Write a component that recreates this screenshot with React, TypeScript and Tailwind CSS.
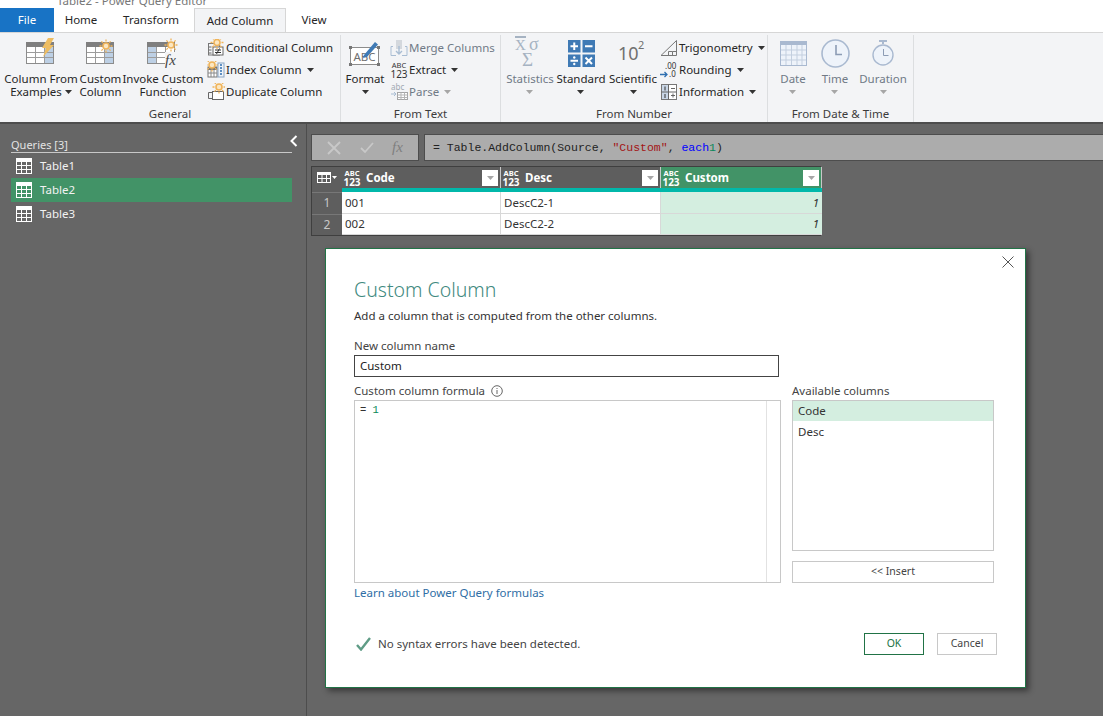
import type { ReactNode } from 'react'

const Caret = ({ light }: { light?: boolean }) => (
  <svg width="7" height="4" viewBox="0 0 7 4" className="shrink-0">
    <path d="M0 0h7L3.5 4z" fill={light ? '#a6a6a6' : '#333333'} />
  </svg>
)

function Sun({ x, y }: { x: number; y: number }) {
  return (
    <g transform={`translate(${x} ${y})`} stroke="#f0b45a" fill="none">
      <circle r="3" strokeWidth="1.6" fill="#fbe7c2" />
      <path d="M0-6.5v2M0 4.5v2M-6.5 0h2M4.5 0h2M-4.6-4.6l1.5 1.5M3.1 3.1l1.5 1.5M-4.6 4.6l1.5-1.5M3.1-3.1l1.5-1.5" strokeWidth="1.3" />
    </g>
  )
}

function GridIcon({ blue = 'last' }: { blue?: 'last' | 'first' }) {
  return (
    <>
      <rect x="0.5" y="4.5" width="27" height="21" fill="#fff" stroke="#8c8c8c" />
      <rect x="0" y="4" width="28" height="5" fill="#7f7f7f" />
      {blue === 'last' ? <rect x="19" y="9" width="8" height="16" fill="#bdd0e5" /> : <rect x="1" y="9" width="8" height="16" fill="#bdd0e5" />}
      <path d="M9.5 9v16M18.5 9v16M1 14.5h26M1 19.5h26" stroke="#9c9c9c" fill="none" />
    </>
  )
}

const ExamplesIcon = () => (
  <svg width="30" height="30" viewBox="0 0 30 30">
    <GridIcon />
    <path d="M22 0h6l-4 7h4L17 19l3-9h-4z" fill="#eebd62" />
  </svg>
)
const CustomIcon = () => (
  <svg width="30" height="30" viewBox="0 0 30 30">
    <GridIcon />
    <Sun x={20} y={8} />
  </svg>
)
const InvokeIcon = () => (
  <svg width="32" height="30" viewBox="0 0 32 30">
    <g transform="translate(0 0)"><GridIcon blue="first" /></g>
    <Sun x={24} y={7} />
    <rect x="18" y="14" width="14" height="15" fill="#f3f4f6" />
    <text x="18" y="27" fontFamily="Liberation Serif, serif" fontStyle="italic" fontSize="15" fill="#444444">fx</text>
  </svg>
)

const SmallIcons: Record<string, ReactNode> = {
  conditional: (
    <svg width="18" height="18" viewBox="0 0 18 18">
      <path d="M1.5 4.5h9M1.5 8h3M1.5 11h3M1.5 14h3" stroke="#666" fill="none" />
      <rect x="1.5" y="4.5" width="11" height="11.5" fill="none" stroke="#777" />
      <rect x="6" y="8" width="10" height="8" fill="#fff" stroke="#666" />
      <path d="M8 11h6M8 13.5h6M12.5 9.5l-3 5.5" stroke="#333" fill="none" />
      <Sun x={10} y={3.5} />
    </svg>
  ),
  index: (
    <svg width="18" height="18" viewBox="0 0 18 18">
      <rect x="1" y="6" width="9" height="10" fill="#fff" stroke="#777" />
      <rect x="1" y="6" width="9" height="3" fill="#777" />
      <path d="M4 9v7M7 9v7M1 12h9" stroke="#888" fill="none" />
      <Sun x={5} y={4} />
      <rect x="11" y="2" width="6" height="14" fill="#eef3f9" stroke="#8aa5c4" />
      <path d="M13 4h2M13 7h2M13 10h2M13 13h2" stroke="#2f6fb0" strokeWidth="1.4" fill="none" />
    </svg>
  ),
  duplicate: (
    <svg width="18" height="18" viewBox="0 0 18 18">
      <path d="M5.5 15.5h-4v-6h4" fill="none" stroke="#666" />
      <rect x="5.5" y="8.5" width="11" height="8" fill="#fff" stroke="#666" />
      <Sun x={12} y={4} />
    </svg>
  ),
  merge: (
    <svg width="18" height="18" viewBox="0 0 18 18">
      <rect x="6" y="1" width="6" height="9" fill="#d4d8dd" />
      <path d="M3 7.5H1v9h5M15 7.5h2v9h-5" fill="none" stroke="#a9bdd3" />
      <path d="M9 7v8M6 12l3 3 3-3" fill="none" stroke="#a9bdd3" strokeWidth="1.4" />
    </svg>
  ),
  abc123: (
    <span className="flex flex-col items-center leading-none text-[#333] [font-family:'Noto_Sans',sans-serif]">
      <span className="text-[7.5px] leading-[8px]">ABC</span>
      <span className="text-[10px] leading-[10px]">123</span>
    </span>
  ),
  parse: (
    <svg width="18" height="18" viewBox="0 0 18 18">
      <text x="1" y="7" fontFamily="Noto Sans, sans-serif" fontSize="8" fill="#a0a8b2">abc</text>
      <path d="M1 11h5M4 9l2 2-2 2" fill="none" stroke="#a9bdd3" />
      <rect x="7.5" y="9.5" width="10" height="7" fill="#fff" stroke="#a5a5a5" />
      <path d="M7.5 12h10M7.5 14.5h10M11 9.5v7M14.5 9.5v7" stroke="#b5b5b5" fill="none" />
    </svg>
  ),
  trig: (
    <svg width="18" height="18" viewBox="0 0 18 18">
      <path d="M1 16.5L16.5 1.5v15z" fill="none" stroke="#777" />
      <path d="M8.5 16.5v-4h4v4M12.5 12.5h4" fill="none" stroke="#777" />
    </svg>
  ),
  round: (
    <span className="relative block h-[18px] w-[18px] [font-family:'Noto_Sans',sans-serif] text-[#333]">
      <span className="absolute left-[5px] top-0 text-[8px] leading-[9px]">.00</span>
      <span className="absolute left-[9px] top-[8px] text-[8px] leading-[9px]">.0</span>
      <svg width="9" height="7" viewBox="0 0 9 7" className="absolute left-0 top-[10px]">
        <path d="M0 3.5h7M4.5 1l2.5 2.5L4.5 6" fill="none" stroke="#2f6fb0" strokeWidth="1.3" />
      </svg>
    </span>
  ),
  info: (
    <svg width="18" height="18" viewBox="0 0 18 18">
      <rect x="1.5" y="1.5" width="15" height="15" fill="#fff" stroke="#777" />
      <rect x="2" y="2" width="6" height="14" fill="#c9d6e6" />
      <path d="M8.5 1.5v15M1.5 9h15M11 5.5h4M11 12.5h4M13 10.5v4" stroke="#666" fill="none" />
      <path d="M5 3.5v4M5 11v4" stroke="#333" fill="none" />
    </svg>
  ),
}

const StatisticsIcon = () => (
  <span className="relative block h-[30px] w-[30px] text-[#a6b3c2] [font-family:'Liberation_Serif',serif]">
    <span className="absolute left-0 top-[-2px] border-t-2 border-[#a6b3c2] text-[15px] leading-[14px]">X</span>
    <span className="absolute left-[14px] top-[-1px] text-[18px] leading-[15px]">σ</span>
    <span className="absolute left-[7px] top-[13px] text-[19px] leading-[18px]">Σ</span>
  </span>
)

const StandardIcon = () => (
  <svg width="27" height="27" viewBox="0 0 27 27">
    <rect width="12.5" height="12.5" fill="#3f7ab5" />
    <rect x="14.5" width="12.5" height="12.5" fill="#3f7ab5" />
    <rect y="14.5" width="12.5" height="12.5" fill="#3f7ab5" />
    <rect x="14.5" y="14.5" width="12.5" height="12.5" fill="#3f7ab5" />
    <g stroke="#fff" strokeWidth="2" fill="none">
      <path d="M2.5 6.25h7.5M6.25 2.5v7.5M17 6.25h7.5M2.5 20.75h7.5M17.5 17.5l6.5 6.5M24 17.5L17.5 24" />
    </g>
    <circle cx="6.25" cy="17.5" r="1.2" fill="#fff" />
    <circle cx="6.25" cy="24" r="1.2" fill="#fff" />
  </svg>
)

const ScientificIcon = () => (
  <span className="relative block h-[30px] w-[30px] text-[#707070] [font-family:'Noto_Sans',sans-serif]">
    <span className="absolute left-0 top-[3px] text-[18px] leading-[24px]">10</span>
    <span className="absolute left-[20px] top-0 text-[11px] leading-[14px]">2</span>
  </span>
)

const DateIcon = () => (
  <svg width="27" height="25" viewBox="0 0 27 25">
    <rect x="0.5" y="0.5" width="26" height="24" fill="#eef3fa" stroke="#a9b9d0" />
    <rect width="27" height="4" fill="#a9b9d0" />
    <path d="M6 4v20M11.5 4v20M17 4v20M22 4v20M1 9h25M1 14h25M1 19h25" stroke="#c3cfdf" fill="none" />
  </svg>
)
const TimeIcon = () => (
  <svg width="29" height="29" viewBox="0 0 29 29">
    <circle cx="14.5" cy="14.5" r="13.5" fill="#eef3fa" stroke="#a9b9d0" strokeWidth="1.6" />
    <path d="M15 6v9.5h6" fill="none" stroke="#8c9cb5" strokeWidth="1.6" />
  </svg>
)
const DurationIcon = () => (
  <svg width="22" height="26" viewBox="0 0 22 26">
    <path d="M7 1h8M11 1v3" stroke="#a9b9d0" strokeWidth="2" fill="none" />
    <circle cx="11" cy="15" r="10" fill="#eef3fa" stroke="#a9b9d0" strokeWidth="1.4" />
    <path d="M11.5 9v6.5h5" fill="none" stroke="#8c9cb5" />
  </svg>
)

const FormatIcon = () => (
  <svg width="32" height="30" viewBox="0 0 32 30">
    <rect x="1.5" y="9.5" width="28" height="17" fill="#fff" stroke="#8c8c8c" />
    <rect x="0" y="8" width="3" height="3" fill="#777" />
    <rect x="28" y="8" width="3" height="3" fill="#777" />
    <rect x="0" y="25" width="3" height="3" fill="#777" />
    <rect x="28" y="25" width="3" height="3" fill="#777" />
    <text x="4.5" y="23" fontFamily="Noto Sans, sans-serif" fontSize="11.5" fill="#707070">ABC</text>
    <path d="M15 17L26 4l3 2.5L18 19l-4 1z" fill="#3f7ab5" />
  </svg>
)

function LargeButton({ lines, icon, width, disabled, caret }: { lines: string[]; icon: ReactNode; width: string; disabled?: boolean; caret?: 'inline' | 'below' }) {
  const color = disabled ? 'text-[#707a86]' : 'text-[#262626]'
  return (
    <div className={`flex flex-col items-center ${width}`}>
      <div className="flex h-[34px] items-center justify-center">{icon}</div>
      <div className={`mt-[2px] flex flex-col items-center leading-[13px] ${color}`}>
        <span className="whitespace-nowrap">{lines[0]}</span>
        {caret === 'below' ? (
          <span className="flex h-[13px] items-center"><Caret light={disabled} /></span>
        ) : (
          <span className="flex items-center gap-[3px] whitespace-nowrap">
            {lines[1]}
            {caret === 'inline' && <Caret />}
          </span>
        )}
      </div>
    </div>
  )
}

function SmallButton({ icon, label, caret, disabled }: { icon: string; label: string; caret?: boolean; disabled?: boolean }) {
  return (
    <div className={`flex h-[22px] items-center gap-[1px] whitespace-nowrap ${disabled ? 'text-[#707a86]' : 'text-[#262626]'}`}>
      <span className="flex w-[18px] items-center justify-center">{SmallIcons[icon]}</span>
      <span>{label}</span>
      {caret && <span className="ml-[4px]"><Caret light={disabled} /></span>}
    </div>
  )
}

function Group({ title, width, children }: { title: string; width: string; children: ReactNode }) {
  return (
    <div className={`relative flex h-[87px] shrink-0 flex-col border-r border-[#dcdee0] ${width}`}>
      <div className="flex h-[72px] items-start">{children}</div>
      <div className="mt-auto pb-[1px] text-center leading-[14px] text-[#3c3c3c]">{title}</div>
    </div>
  )
}

function Ribbon() {
  const tabs = ['Home', 'Transform', 'Add Column', 'View']
  const tabWidth: Record<string, string> = { Home: 'w-[54px]', Transform: 'w-[86px]', 'Add Column': 'w-[92px]', View: 'w-[56px]' }
  return (
    <div className="bg-white">
      {/* title bar is cut off by the screenshot */}
      <div className="flex h-[8px] items-end overflow-hidden pl-[57px] text-[11.5px] leading-[14px] text-[#777]">
        <span className="whitespace-nowrap">Table2 - Power Query Editor</span>
      </div>
      <div className="relative z-10 flex h-[24px] items-stretch">
        <div className="flex w-[54px] items-center justify-center bg-[#1873c5] text-white">File</div>
        {tabs.map(tab => (
          <div
            key={tab}
            className={`flex items-center justify-center text-[#262626] ${tabWidth[tab]} ${tab === 'Add Column' ? 'border border-b-0 border-[#d6d6d6] bg-[#f3f4f6]' : ''}`}
          >
            {tab}
          </div>
        ))}
      </div>
      <div className="flex h-[92px] items-start border-t border-b-2 border-t-[#d6d6d6] border-b-[#4d4d4d] bg-[#f3f4f6] pt-[2px]">
        <Group title="General" width="w-[341px]">
          <div className="flex w-[207px] shrink-0 pl-[6px] pt-[1px]">
            <LargeButton lines={['Column From', 'Examples']} icon={<ExamplesIcon />} width="w-[70px]" caret="inline" />
            <LargeButton lines={['Custom', 'Column']} icon={<CustomIcon />} width="w-[49px]" />
            <LargeButton lines={['Invoke Custom', 'Function']} icon={<InvokeIcon />} width="w-[76px]" />
          </div>
          <div className="pt-[2px]">
            <SmallButton icon="conditional" label="Conditional Column" />
            <SmallButton icon="index" label="Index Column" caret />
            <SmallButton icon="duplicate" label="Duplicate Column" />
          </div>
        </Group>
        <Group title="From Text" width="w-[160px]">
          <div className="w-[49px] shrink-0 pl-[2px] pt-[1px]">
            <LargeButton lines={['Format']} icon={<FormatIcon />} width="w-[44px]" caret="below" />
          </div>
          <div className="pt-[2px]">
            <SmallButton icon="merge" label="Merge Columns" disabled />
            <SmallButton icon="abc123" label="Extract" caret />
            <SmallButton icon="parse" label="Parse" caret disabled />
          </div>
        </Group>
        <Group title="From Number" width="w-[267px]">
          <div className="flex w-[159px] shrink-0 pl-[4px] pt-[1px]">
            <LargeButton lines={['Statistics']} icon={<StatisticsIcon />} width="w-[50px]" disabled caret="below" />
            <LargeButton lines={['Standard']} icon={<StandardIcon />} width="w-[52px]" caret="below" />
            <LargeButton lines={['Scientific']} icon={<ScientificIcon />} width="w-[52px]" caret="below" />
          </div>
          <div className="pt-[2px]">
            <SmallButton icon="trig" label="Trigonometry" caret />
            <SmallButton icon="round" label="Rounding" caret />
            <SmallButton icon="info" label="Information" caret />
          </div>
        </Group>
        <Group title="From Date & Time" width="w-[146px]">
          <div className="flex pl-[8px] pt-[1px]">
            <LargeButton lines={['Date']} icon={<DateIcon />} width="w-[34px]" disabled caret="below" />
            <LargeButton lines={['Time']} icon={<TimeIcon />} width="w-[50px]" disabled caret="below" />
            <LargeButton lines={['Duration']} icon={<DurationIcon />} width="w-[46px]" disabled caret="below" />
          </div>
        </Group>
      </div>
    </div>
  )
}

const QueryIcon = () => (
  <svg width="16" height="16" viewBox="0 0 16 16" className="shrink-0">
    <rect x="0.5" y="0.5" width="15" height="15" fill="none" stroke="#fff" />
    <rect width="16" height="4" fill="#fff" />
    <path d="M5.5 4v12M10.5 4v12M0 7.5h16M0 11.5h16" stroke="#fff" fill="none" />
  </svg>
)

function Sidebar() {
  const queries = ['Table1', 'Table2', 'Table3']
  return (
    <div className="w-[307px] shrink-0 border-r border-[#4d4d4d] pl-[11px] pr-[14px] pt-[14px]">
      <div className="relative flex h-[15px] items-end border-b border-[#c8c8c8] pb-[1px] text-[11px] leading-[13px] text-[#e3e3e3]">
        Queries [3]
        <svg width="8" height="12" viewBox="0 0 8 12" className="absolute right-[-6px] top-[-3px]">
          <path d="M6.5 1L1.5 6l5 5" fill="none" stroke="#fff" strokeWidth="2" />
        </svg>
      </div>
      <div className="mt-[1px]">
        {queries.map(q => (
          <div key={q} className={`flex h-[24px] items-center gap-[8px] pl-[5px] text-[#f2f2f2] ${q === 'Table2' ? 'bg-[#429367]' : ''}`}>
            <QueryIcon />
            {q}
          </div>
        ))}
      </div>
    </div>
  )
}

const TypeBadge = () => (
  <span className="flex w-[18px] shrink-0 flex-col items-center text-white">
    <span className="text-[7.5px] leading-[8px]">ABC</span>
    <span className="text-[10px] leading-[10px]">123</span>
  </span>
)

function ColumnHead({ name, active }: { name: string; active?: boolean }) {
  return (
    <div className={`flex items-center pl-[1px] pr-[2px] font-bold text-white ${active ? 'bg-[#429367]' : 'bg-[#5e5e5e]'} border-r border-[#c8c8c8]`}>
      <TypeBadge />
      <span className="ml-[5px] flex-1 text-[11.5px]">{name}</span>
      <span className="flex h-[16px] w-[16px] items-center justify-center bg-white">
        <Caret light />
      </span>
    </div>
  )
}

function PreviewTable() {
  const rows = [['1', '001', 'DescC2-1'], ['2', '002', 'DescC2-2']]
  return (
    <div className="mt-[5px] grid w-[510px] grid-cols-[30px_159px_160px_161px] border border-[#3f3f3f] text-[11.5px] text-[#333]">
      <div className="flex h-[21px] items-center justify-center gap-[1px] bg-[#5e5e5e]">
        <svg width="14" height="11" viewBox="0 0 14 11">
          <rect x="0.5" y="0.5" width="13" height="10" fill="none" stroke="#fff" />
          <rect width="14" height="3" fill="#fff" />
          <path d="M5 3v8M9.5 3v8M0 6.5h14" stroke="#fff" fill="none" />
        </svg>
        <svg width="5" height="3" viewBox="0 0 5 3"><path d="M0 0h5L2.5 3z" fill="#fff" /></svg>
      </div>
      <ColumnHead name="Code" />
      <ColumnHead name="Desc" />
      <ColumnHead name="Custom" active />
      <div className="h-[4px] bg-[#5e5e5e]" />
      <div className="col-span-3 h-[4px] bg-[#01b8aa]" />
      {rows.map(r => (
        <div key={r[0]} className="col-span-4 grid h-[21.5px] grid-cols-subgrid">
          <div className="flex items-center justify-center border-t border-[#777] bg-[#5e5e5e] text-[12px] text-[#c8c8c8]">{r[0]}</div>
          <div className="flex items-center border-b border-r border-[#d8d8d8] bg-white pl-[3px]">{r[1]}</div>
          <div className="flex items-center border-b border-r border-[#d8d8d8] bg-white pl-[3px]">{r[2]}</div>
          <div className="flex items-center justify-end border-b border-[#d8d8d8] bg-[#d4eee0] pr-[3px] italic">1</div>
        </div>
      ))}
    </div>
  )
}

function FormulaBar() {
  return (
    <div className="flex h-[27px] gap-[5px]">
      <div className="flex w-[108px] shrink-0 items-center justify-around bg-[#acacac] px-[6px] border border-[#4d4d4d]">
        <svg width="14" height="14" viewBox="0 0 14 14"><path d="M1 1l12 12M13 1L1 13" stroke="#c8c8c8" strokeWidth="1.8" /></svg>
        <svg width="14" height="12" viewBox="0 0 14 12"><path d="M1 6l4 4 8-9" fill="none" stroke="#c8c8c8" strokeWidth="1.8" /></svg>
        <span className="text-[15px] italic text-[#7f7f7f] [font-family:'Liberation_Serif',serif]">fx</span>
      </div>
      <div className="flex flex-1 items-center whitespace-pre border-y border-l border-[#4d4d4d] bg-[#acacac] pl-[8px] text-[11.5px] text-[#222] [font-family:'Liberation_Mono',monospace]">
        = Table.AddColumn(Source, <span className="text-[#a31515]">"Custom"</span>, <span className="text-[#0000ff]">each</span> <span className="text-[#09885a]">1</span>)
      </div>
    </div>
  )
}

function Dialog() {
  return (
    <div className="absolute left-[325px] top-[248px] flex h-[440px] w-[701px] flex-col border border-[#217346] bg-white px-[28px] shadow-[3px_3px_6px_rgba(0,0,0,0.45)]">
      <svg width="12" height="12" viewBox="0 0 12 12" className="absolute right-[11px] top-[7px]">
        <path d="M0.5 0.5l11 11M11.5 0.5l-11 11" stroke="#555" />
      </svg>
      <h1 className="mt-[28px] text-[19.5px] font-light leading-[26px] text-[#3f8a80]">Custom Column</h1>
      <p className="mt-[4px] text-[#333] leading-[18px]">Add a column that is computed from the other columns.</p>
      <label className="mt-[13px] leading-[16px] text-[#444]">New column name</label>
      <div className="mt-[1px] flex h-[22px] w-[425px] items-center border border-[#444] pl-[5px] text-[#222]">Custom</div>
      <div className="mt-[6px] grid grid-cols-[427px_202px] gap-x-[11px]">
        <div className="flex h-[16px] items-center gap-[6px] leading-[16px] text-[#444]">
          Custom column formula
          <svg width="12" height="12" viewBox="0 0 12 12">
            <circle cx="6" cy="6" r="5.3" fill="none" stroke="#666" />
            <path d="M6 5v4M6 3v1" stroke="#666" />
          </svg>
        </div>
        <div className="leading-[16px] text-[#444]">Available columns</div>
        <div className="mt-[1px] flex h-[183px] border border-[#c8c8c8] text-[10.5px] [font-family:'Liberation_Mono',monospace]">
          <div className="flex-1 whitespace-pre pl-[5px] pt-[2px] text-[#333]">= <span className="text-[#09885a]">1</span></div>
          <div className="w-[14px] border-l border-[#e2e2e2]" />
        </div>
        <div className="mt-[1px] flex flex-col">
          <div className="h-[151px] border border-[#c8c8c8] text-[#333]">
            <div className="flex h-[20px] items-center bg-[#d4eee0] pl-[5px]">Code</div>
            <div className="flex h-[21px] items-center pl-[5px]">Desc</div>
          </div>
          <div className="mt-[10px] flex h-[22px] items-center justify-center border border-[#c8c8c8] text-[10.5px] text-[#444]">&lt;&lt; Insert</div>
        </div>
      </div>
      <div className="mt-[2px] leading-[16px] text-[#2f6ea5]">Learn about Power Query formulas</div>
      <div className="mt-[32px] flex items-center">
        <svg width="15" height="14" viewBox="0 0 15 14" className="ml-[2px] shrink-0">
          <path d="M1 8l4 4.5L14 1" fill="none" stroke="#5f9c86" strokeWidth="2.4" />
        </svg>
        <span className="ml-[7px] text-[#444]">No syntax errors have been detected.</span>
        <div className="ml-auto flex gap-[13px] text-[10.5px]">
          <div className="flex h-[22px] w-[60px] items-center justify-center border border-[#217346] text-[#217346]">OK</div>
          <div className="flex h-[22px] w-[60px] items-center justify-center border border-[#c8c8c8] text-[#444]">Cancel</div>
        </div>
      </div>
    </div>
  )
}

export default function App() {
  return (
    <div className="relative flex h-[716px] w-[1103px] flex-col overflow-hidden bg-[#666666] text-[11.5px] [font-family:'Noto_Sans',sans-serif]">
      <Ribbon />
      <div className="flex flex-1">
        <Sidebar />
        <div className="flex-1 pl-[4px] pt-[10px]">
          <FormulaBar />
          <PreviewTable />
        </div>
      </div>
      <Dialog />
    </div>
  )
}
